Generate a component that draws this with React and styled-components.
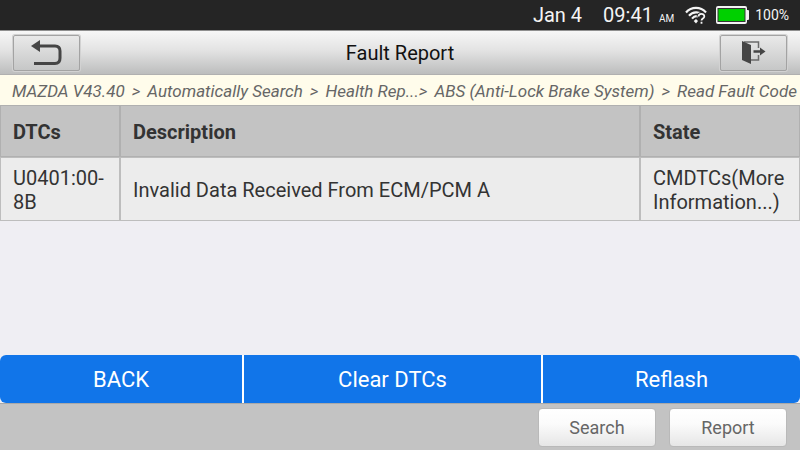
import React from 'react';
import styled, { createGlobalStyle } from 'styled-components';

const GlobalStyle = createGlobalStyle`
    * {
        box-sizing: border-box;
    }

    body {
        margin: 0;
        font-family: Roboto, 'Liberation Sans', sans-serif;
        color: #333;
        background: #efeef3;
    }

    button {
        font-family: inherit;
        margin: 0;
        cursor: pointer;
    }
`;

const Page = styled.div`
    display: flex;
    flex-direction: column;
    min-height: 100vh;
`;

const StatusBar = styled.div`
    display: flex;
    align-items: center;
    justify-content: flex-end;
    height: 30px;
    padding-right: 11px;
    color: #f4f4f4;
    background: #252525;
    font-size: 20px;
    white-space: nowrap;

    svg {
        display: block;
    }
`;

const DateText = styled.span`
    margin-right: 21px;
`;

const Time = styled.span`
    display: flex;
    align-items: baseline;
    gap: 6px;
    margin-right: 11px;
`;

const Meridiem = styled.small`
    font-size: 10px;
`;

const Battery = styled.span`
    display: flex;
    align-items: center;
    gap: 6px;
    margin-left: 9px;
    font-size: 14px;
`;

const Toolbar = styled.header`
    display: flex;
    align-items: center;
    justify-content: space-between;
    height: 45px;
    padding: 0 13px;
    border-top: 1px solid #8f8f8f;
    border-bottom: 1px solid #b0b0b0;
    background: linear-gradient(#f7f7f7, #e3e3e3 45%, #bcbdbd);
`;

const Title = styled.h1`
    margin: 0;
    font-size: 20px;
    font-weight: 400;
    color: #111;
`;

const IconButton = styled.button`
    display: flex;
    align-items: center;
    justify-content: center;
    width: 67px;
    height: 36px;
    padding: 0;
    border: 1px solid #a3a3a3;
    border-radius: 2px;
    background: linear-gradient(#e9e9e9, #c6c7c7);
    box-shadow: 0 0 0 1px #d2d2d2;
`;

const Breadcrumb = styled.nav`
    display: flex;
    gap: 7px;
    height: 30px;
    padding-left: 12px;
    color: #666;
    background: #fffceb;
    font-size: 17px;
    font-style: italic;
    line-height: 32px;
    white-space: nowrap;
`;

const Table = styled.table`
    width: 100%;
    border-collapse: separate;
    border-spacing: 0;
    table-layout: fixed;
    font-size: 20px;
    line-height: 24px;
    text-align: left;
`;

const HeadCell = styled.th`
    width: ${({ $width }) => $width};
    height: 52px;
    padding: 2px 12px 0;
    border: 1px solid #b0b0b0;
    background: #c3c3c3;
    font-weight: 700;
`;

const Cell = styled.td`
    height: 64px;
    padding: 2px 12px 0;
    border: 1px solid #bdbdbd;
    background: #ececec;
`;

const Content = styled.main`
    flex: 1;
`;

const Actions = styled.div`
    display: grid;
    grid-template-columns: 242fr 297fr 257fr;
    gap: 2px;
    overflow: hidden;
    border-radius: 6px;
    background: #fff;
`;

const ActionButton = styled.button`
    height: 48px;
    padding: 0;
    border: 0;
    color: #fff;
    background: #1175e9;
    font-size: 22px;
`;

const Footer = styled.footer`
    display: flex;
    align-items: center;
    justify-content: flex-end;
    gap: 13px;
    height: 47px;
    padding: 0 13px;
    border-top: 1px solid #a9a9a9;
    background: #c3c3c3;
`;

const FooterButton = styled.button`
    width: 118px;
    height: 39px;
    padding: 0;
    border: 1px solid #b9b9b9;
    border-radius: 4px;
    color: #666;
    background: linear-gradient(#fff, #fbfbfb 40%, #e6e6e6);
    font-size: 18px;
`;

const WifiIcon = () => (
    <svg width="22" height="18" viewBox="0 0 22 18" fill="none" stroke="#f4f4f4">
        <path d="M1 6.500C6.500 0.400 15.500 0.400 21 6.500" strokeWidth="2.200" />
        <path d="M4 9.800C7.800 5.500 14 5.200 18 9" strokeWidth="2.200" />
        <path d="M7 12.600C9 10.300 11 9.800 13 10.500" strokeWidth="2.200" />
        <path d="M8.700 15L11 13L13 15L11 17.500Z" fill="#f4f4f4" stroke="none" />
        <path d="M13.500 10.500C13.500 7 19.500 7 19.300 10.500C19.200 12.600 16.500 12.500 16.500 14.500V17.500" stroke="#252525" strokeWidth="4" />
        <path d="M13.500 10.500C13.500 7 19.500 7 19.300 10.500C19.200 12.600 16.500 12.500 16.500 14.500M16.500 15.800V17.800" strokeWidth="1.800" />
    </svg>
);

const BatteryIcon = () => (
    <svg width="33" height="18" viewBox="0 0 33 18">
        <path d="M2 0H29Q31 0 31 2V4H32Q33 4 33 5V13Q33 14 32 14H31V16Q31 18 29 18H2Q0 18 0 16V2Q0 0 2 0Z" fill="#f4f4f4" />
        <rect x="1.500" y="2" width="28" height="14" fill="#353535" />
        <rect x="2.500" y="3" width="26" height="12" fill="#00d000" />
    </svg>
);

const BackIcon = () => (
    <svg width="32" height="28" viewBox="0 0 32 28" fill="none">
        <path d="M7 7H24Q29 7 29 12V19Q29 24.500 24 24.500H3" stroke="#454545" strokeWidth="3" />
        <path d="M0 7L9 1V13Z" fill="#454545" />
    </svg>
);

const ExitIcon = () => (
    <svg width="24" height="25" viewBox="1 0 24 25" fill="none">
        <path d="M3 2H17.500V8M17.500 15V20H10" stroke="#6a6a6a" strokeWidth="1.500" />
        <path d="M1 1L10 5V24L1 20Z" fill="#454545" />
        <path d="M12.500 11.500H20" stroke="#454545" strokeWidth="2.500" />
        <path d="M19 7.500L24.500 11.500L19 15.500Z" fill="#454545" />
    </svg>
);

const COLUMNS = [
    { title: 'DTCs', width: '15%' },
    { title: 'Description', width: '65%' },
    { title: 'State', width: '20%' },
];

const FAULTS = [
    {
        code: 'U0401:00-8B',
        description: 'Invalid Data Received From ECM/PCM A',
        state: 'CMDTCs(More Information...)',
    },
];

const App = () => (
    <Page>
        <GlobalStyle />
        <StatusBar>
            <DateText>Jan 4</DateText>
            <Time>
                09:41
                <Meridiem>AM</Meridiem>
            </Time>
            <WifiIcon />
            <Battery>
                <BatteryIcon />
                100%
            </Battery>
        </StatusBar>
        <Toolbar>
            <IconButton type="button" aria-label="Back"><BackIcon /></IconButton>
            <Title>Fault Report</Title>
            <IconButton type="button" aria-label="Exit"><ExitIcon /></IconButton>
        </Toolbar>
        <Breadcrumb>
            <span>MAZDA V43.40</span>
            <span>&gt;</span>
            <span>Automatically Search</span>
            <span>&gt;</span>
            <span>Health Rep...&gt;</span>
            <span>ABS (Anti-Lock Brake System)</span>
            <span>&gt;</span>
            <span>Read Fault Code</span>
        </Breadcrumb>
        <Content>
            <Table>
                <thead>
                    <tr>
                        {COLUMNS.map(({ title, width }) => (
                            <HeadCell key={title} $width={width}>{title}</HeadCell>
                        ))}
                    </tr>
                </thead>
                <tbody>
                    {FAULTS.map(({ code, description, state }) => (
                        <tr key={code}>
                            <Cell>{code}</Cell>
                            <Cell>{description}</Cell>
                            <Cell>{state}</Cell>
                        </tr>
                    ))}
                </tbody>
            </Table>
        </Content>
        <Actions>
            <ActionButton type="button">BACK</ActionButton>
            <ActionButton type="button">Clear DTCs</ActionButton>
            <ActionButton type="button">Reflash</ActionButton>
        </Actions>
        <Footer>
            <FooterButton type="button">Search</FooterButton>
            <FooterButton type="button">Report</FooterButton>
        </Footer>
    </Page>
);

export default App;
